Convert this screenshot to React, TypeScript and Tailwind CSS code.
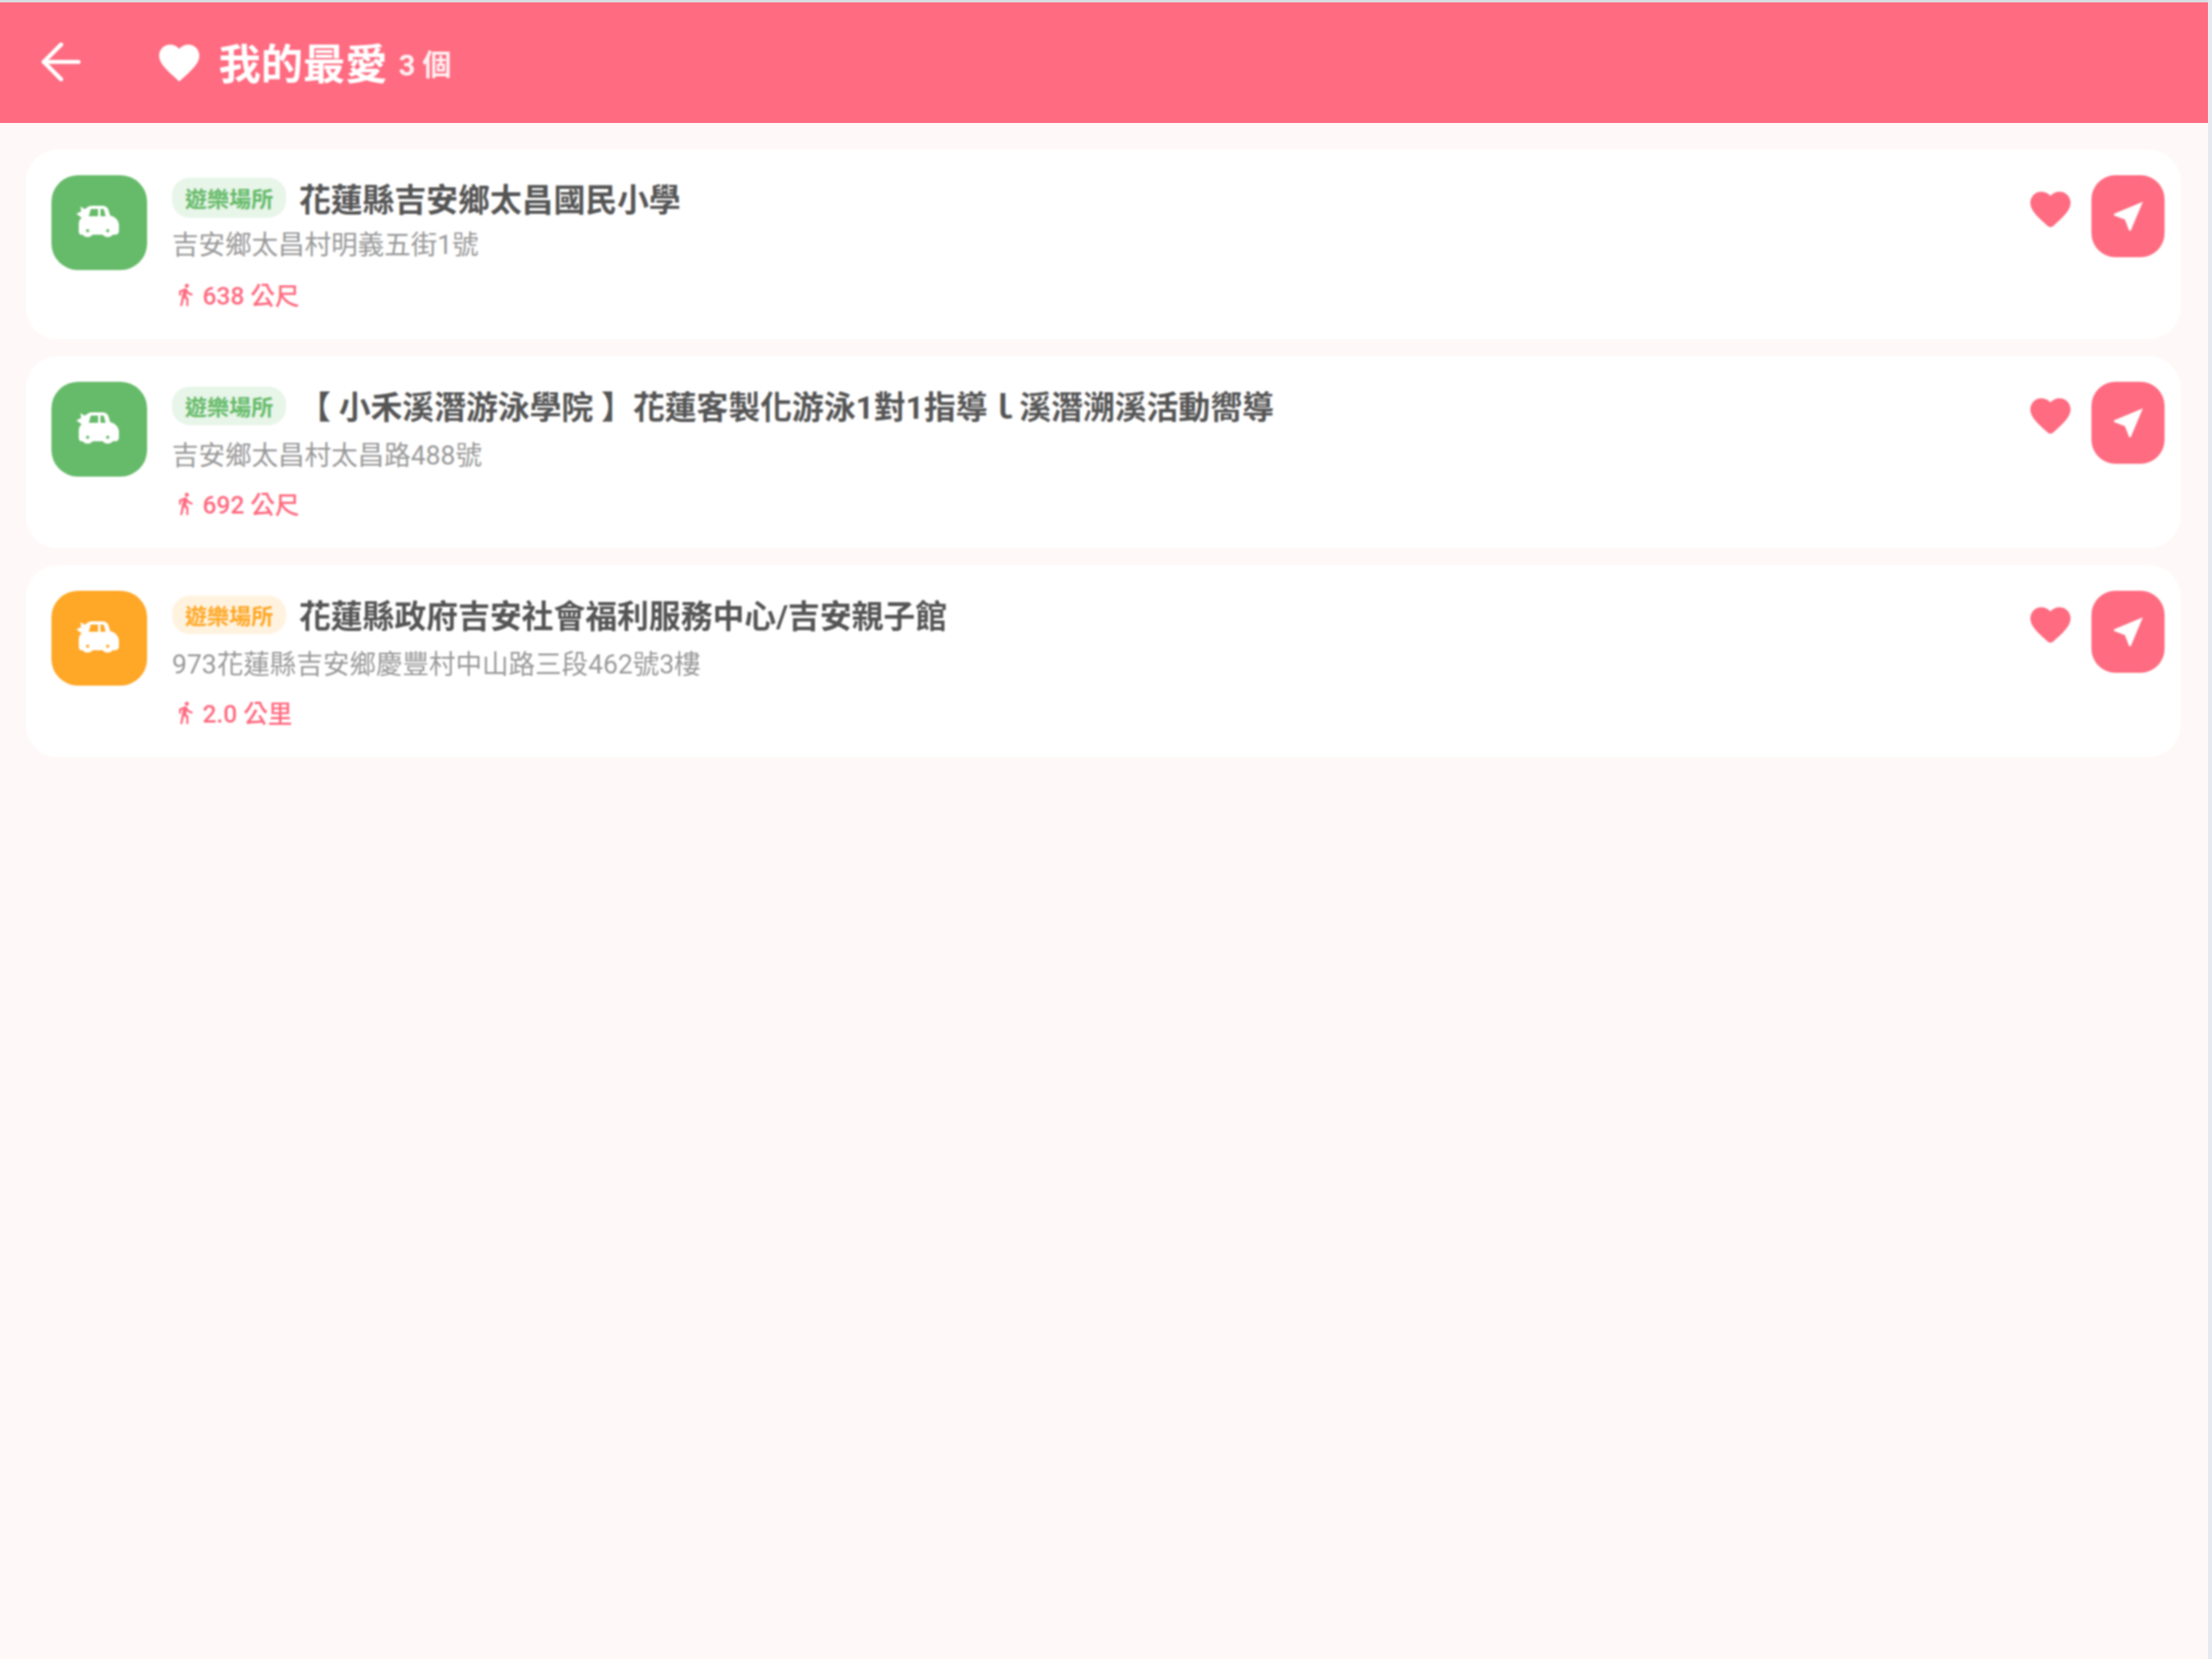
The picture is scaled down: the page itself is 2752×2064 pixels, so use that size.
import { ArrowLeft } from 'lucide-react';

const places = [
    {
        name: '花蓮縣吉安鄉太昌國民小學',
        address: '吉安鄉太昌村明義五街1號',
        distance: '638 公尺',
        iconBg: 'bg-[#66bb6a]',
        iconCut: '#66bb6a',
        badge: 'h-[50px] bg-[#e8f5e9] text-[#66bb6a]',
        card: 'h-[236px]',
        col: 'pt-[3px]',
        title: 'pt-[8px]',
        sub: 'mt-[15px]',
        dist: 'mt-[26px]',
    },
    {
        name: '【 小禾溪潛游泳學院 】花蓮客製化游泳1對1指導ｌ溪潛溯溪活動嚮導',
        address: '吉安鄉太昌村太昌路488號',
        distance: '692 公尺',
        iconBg: 'bg-[#66bb6a]',
        iconCut: '#66bb6a',
        badge: 'h-[48px] bg-[#e8f5e9] text-[#66bb6a]',
        card: 'h-[239px]',
        col: 'pt-[6px]',
        title: 'pt-[4px]',
        sub: 'mt-[17px]',
        dist: 'mt-[24px]',
    },
    {
        name: '花蓮縣政府吉安社會福利服務中心/吉安親子館',
        address: '973花蓮縣吉安鄉慶豐村中山路三段462號3樓',
        distance: '2.0 公里',
        iconBg: 'bg-[#ffa726]',
        iconCut: '#ffa726',
        badge: 'h-[48px] bg-[#fff3e0] text-[#ffa726]',
        card: 'h-[239px]',
        col: 'pt-[6px]',
        title: 'pt-[4px]',
        sub: 'mt-[17px]',
        dist: 'mt-[24px]',
    },
];

function CarIcon({ cut }: { cut: string }) {
    return (
        <svg width="54" height="42" viewBox="0 0 54 42" fill="white" className="mt-[-2px] ml-[-3px]">
            <path d="M0 11l6-3-1-6 5 3 5-2-1 13-6 1z" />
            <path d="M12 6q1-5 8-5h12q6 0 8 5l2 7q10 3 11 11v8q0 5-5 5H6q-3 0-3-5v-9q0-6 7-9z" />
            <circle cx="14" cy="32" r="8" />
            <circle cx="39" cy="32" r="8" />
            <path d="M18 5h9v9H15.5z" fill={cut} />
            <path d="M30 5h4l2.5 9H30z" fill={cut} />
            <circle cx="14" cy="32" r="2" fill={cut} />
            <circle cx="39" cy="32" r="2" fill={cut} />
        </svg>
    );
}

function App() {
    return (
        <div className="flex h-[2064px] w-[2752px] bg-[#e6eaf0] font-['Roboto','Noto_Sans_CJK_TC',sans-serif]">
            <div className="flex w-[2747px] flex-col bg-[#fff8f8]">
                <div className="h-[3px] bg-[#d9dce0]" />
                <header className="h-[150px] bg-[#ff6b81] text-white">
                    <div className="flex h-full items-center pb-[6px] blur-[0.8px]">
                        <ArrowLeft size={74} strokeWidth={1.7} className="mt-[4px] ml-[39px]" />
                        <svg width="60" height="60" viewBox="0 0 24 24" fill="white" className="mt-[6px] ml-[80px]">
                            <path d="M12 21.35l-1.45-1.32C5.4 15.36 2 12.28 2 8.5 2 5.42 4.42 3 7.5 3c1.74 0 3.41.81 4.5 2.09C13.09 3.81 14.76 3 16.5 3 19.58 3 22 5.42 22 8.5c0 3.78-3.4 6.86-8.55 11.54L12 21.35z" />
                        </svg>
                        <h1 className="mt-[12px] ml-[19px] text-[52.5px] leading-none font-bold">我的最愛</h1>
                        <span className="ml-[14px] pt-[13px] text-[36px] leading-none font-bold opacity-90">3 個</span>
                    </div>
                </header>
                <main className="flex flex-col gap-[21px] pt-[33px] pr-[34px] pl-[32px] blur-[0.8px]">
                    {places.map((p) => (
                        <div key={p.name} className={`flex items-start rounded-[40px] bg-white pt-[32px] pr-[20px] pl-[32px] ${p.card}`}>
                            <div className={`flex h-[118px] w-[119px] shrink-0 items-center justify-center rounded-[33px] ${p.iconBg}`}>
                                <CarIcon cut={p.iconCut} />
                            </div>
                            <div className={`ml-[31px] min-w-0 flex-1 ${p.col}`}>
                                <div className="flex h-[50px] items-start">
                                    <span className={`flex w-[142px] shrink-0 items-center justify-center rounded-[22px] pt-[6px] text-[27.5px] leading-none font-bold ${p.badge}`}>
                                        遊樂場所
                                    </span>
                                    <span className={`ml-[16px] self-center text-[39.6px] leading-none font-bold text-[#555] ${p.title}`}>{p.name}</span>
                                </div>
                                <p className={`text-[33px] leading-[38px] text-[#999] ${p.sub}`}>{p.address}</p>
                                <div className={`flex items-center text-[30.5px] leading-[38px] font-medium text-[#ff6b81] ${p.dist}`}>
                                    <svg width="31" height="31" viewBox="0 0 24 24" fill="currentColor" className="mt-[-5px] ml-[1px]">
                                        <path d="M13.5 5.5c1.1 0 2-.9 2-2s-.9-2-2-2-2 .9-2 2 .9 2 2 2zM9.8 8.9L7 23h2.1l1.8-8 2.1 2v6h2v-7.5l-2.1-2 .6-3C14.8 12 16.8 13 19 13v-2c-1.9 0-3.5-1-4.3-2.4l-1-1.6c-.4-.6-1-1-1.7-1-.3 0-.5.1-.8.1L6 8.3V13h2V9.6l1.8-.7" />
                                    </svg>
                                    <span className="ml-[6px]">{p.distance}</span>
                                </div>
                            </div>
                            <svg width="60" height="60" viewBox="0 0 24 24" fill="#ff6b81" className="mt-[13px] shrink-0">
                                <path d="M13.35 20.13c-.76.69-1.93.69-2.69-.01l-.11-.1C5.3 15.27 1.87 12.16 2 8.28c.06-1.7.93-3.33 2.34-4.29 2.64-1.8 5.9-.96 7.66 1.1 1.76-2.06 5.02-2.91 7.66-1.1 1.41.96 2.28 2.59 2.34 4.29.14 3.88-3.3 6.99-8.55 11.76l-.1.09z" />
                            </svg>
                            <button className="ml-[21px] flex h-[102px] w-[91px] shrink-0 items-center justify-center rounded-[30px] bg-[#ff6b81]">
                                <svg width="48" height="48" viewBox="0 0 24 24" fill="white">
                                    <path d="M21 3L3 10.53v.98l6.84 2.65L12.48 21h.98L21 3z" />
                                </svg>
                            </button>
                        </div>
                    ))}
                </main>
            </div>
        </div>
    );
}

export default App;
